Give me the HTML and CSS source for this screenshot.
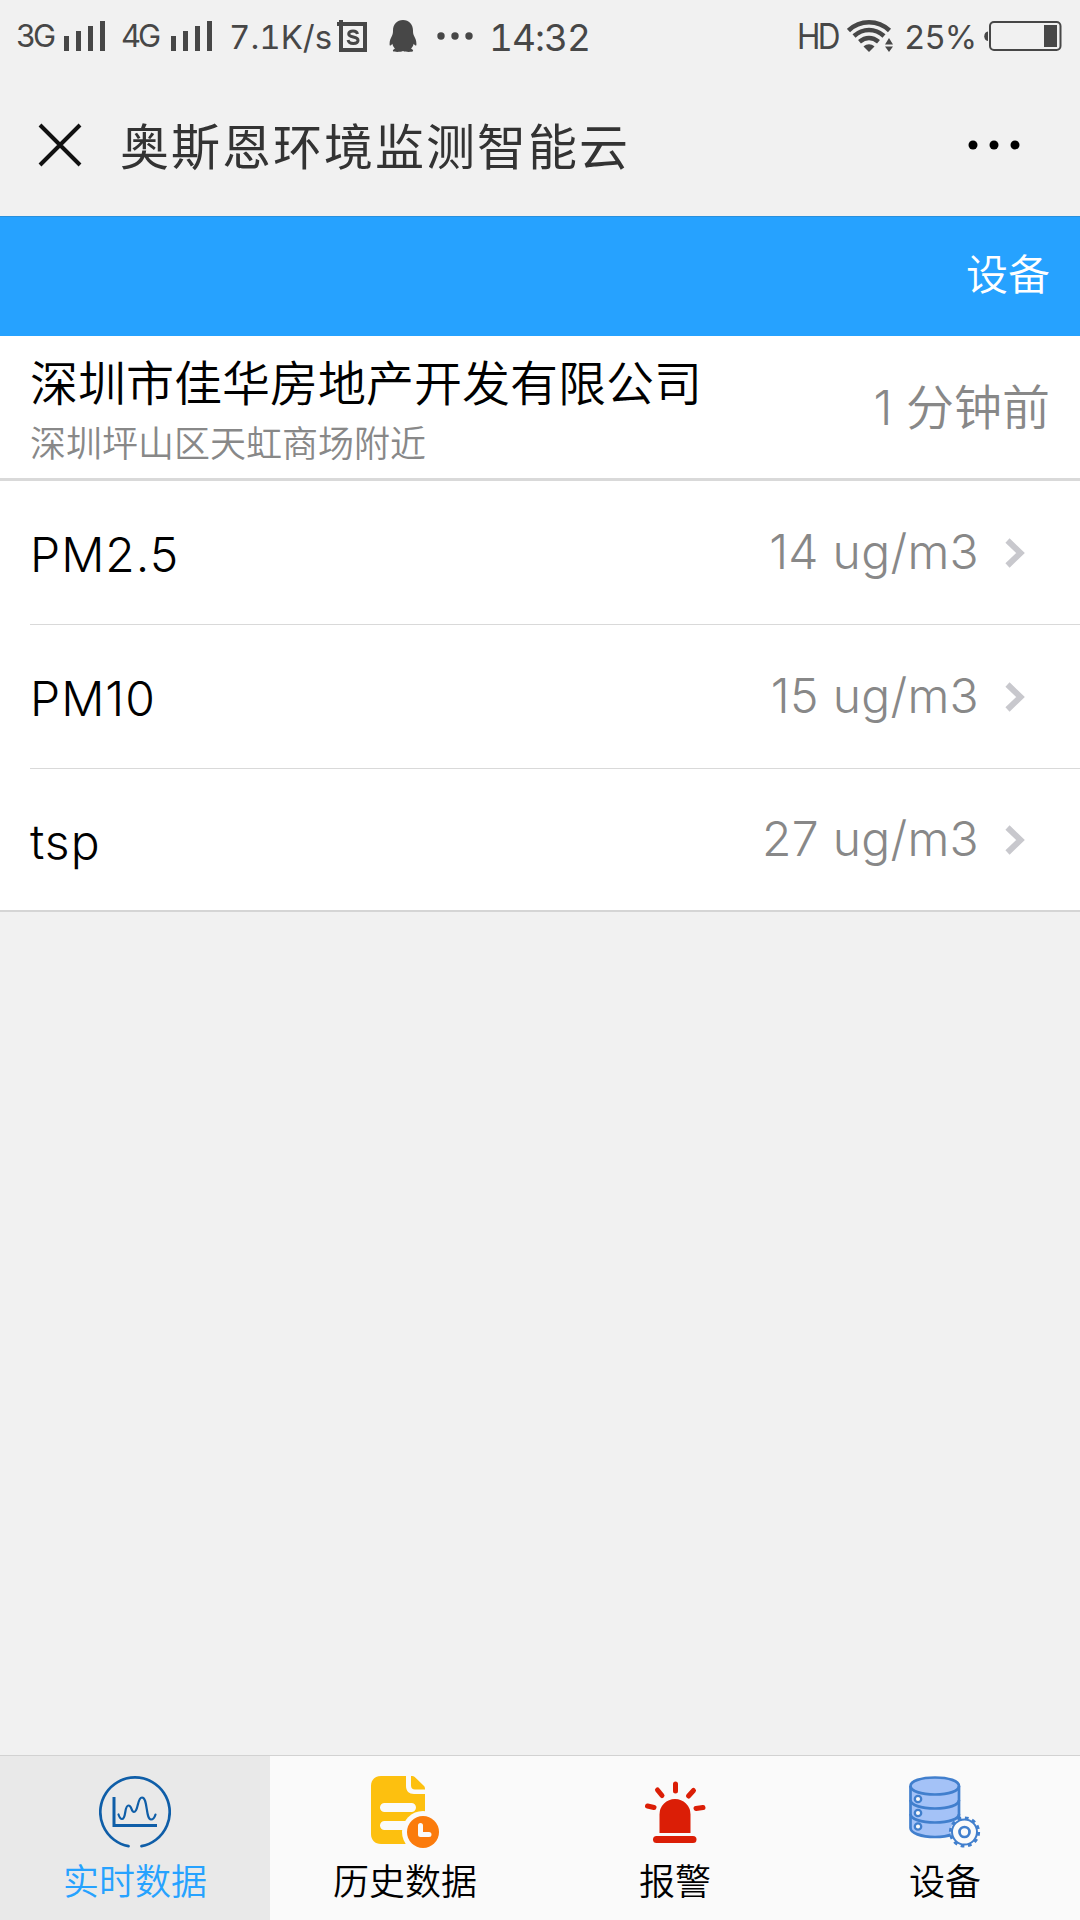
FILE: index.html
```html
<!DOCTYPE html>
<html lang="zh-CN">
<head>
    <meta charset="UTF-8">
    <title>奥斯恩环境监测智能云</title>
    <meta name="viewport" content="width=device-width, initial-scale=1.0">
    <link rel="stylesheet" href="styles.css">
</head>
<body>
    <div class="status">
        <span class="net">3G</span>
        <svg class="signal" width="42" height="30" viewBox="0 0 42 30"><path d="M0 15h5v15H0zM12 10h5v20h-5zM24 5h5v25h-5zM36 0h5v30h-5z"/></svg>
        <span class="net net-4g">4G</span>
        <svg class="signal" width="42" height="30" viewBox="0 0 42 30"><path d="M0 15h5v15H0zM12 10h5v20h-5zM24 5h5v25h-5zM36 0h5v30h-5z"/></svg>
        <span class="speed">7.1K/s</span>
        <svg class="sbox" width="30" height="32" viewBox="0 0 30 32">
            <path fill-rule="evenodd" d="M2 0h4v2h24v30H2V6H0V2h2zM6 6v22h20V6z"/>
            <path class="line" d="M20.500 14c-.5-2-2-3-4.500-3-2.600 0-4.300 1.200-4.300 3 0 4.200 9.300 1.800 9.300 6.200 0 2-2 3.200-4.700 3.200-2.800 0-4.800-1.200-5.200-3.500"/>
        </svg>
        <svg class="qq" width="28" height="32" viewBox="0 0 28 32"><path d="M14 0c6 0 10 4.500 10 10.500 0 2 .2 3.600 1 5.300 1.600 3 2.800 6 2.300 9.400-.5 1-1.700-.2-2.600-1.500-.5 2-1.400 3.500-2.600 5 1.600.7 2 1.200 2 2.300-1 1.200-7.300 1.200-10.100 0-2.800 1.200-9 1.200-10.100 0 0-1.100.5-1.600 2-2.300-1.200-1.500-2-3-2.600-5C2.400 25 1.200 26.200.7 25.200c-.5-3.400.7-6.400 2.300-9.400.8-1.700 1-3.300 1-5.300C4 4.500 8 0 14 0z"/></svg>
        <svg class="dots" width="36" height="8" viewBox="0 0 36 8"><circle cx="4" cy="4" r="3.700"/><circle cx="18" cy="4" r="3.700"/><circle cx="32" cy="4" r="3.700"/></svg>
        <span class="time">14:32</span>

        <span class="hd">HD</span>
        <svg class="wifi" width="46" height="32" viewBox="0 0 46 32">
            <g class="arc">
                <path d="M1.500 10.500C13-.5 31-.5 42.500 10.500"/>
                <path d="M7 16c9-8 21-8 30 0"/>
                <path d="M12.500 21.800c6-5 13-5 19 0"/>
            </g>
            <path d="M16.500 26.500c3.500-3 7.500-3 11 0L22 32z"/>
            <path d="M38 24.500l4-6.500 4 6.500zM38 26.500h8L42 32z"/>
        </svg>
        <span class="percent">25%</span>
        <svg class="battery" width="78" height="30" viewBox="0 0 78 30">
            <path d="M4 10.500v9.500c-5 0-5-9.500 0-9.500z"/>
            <rect class="case" x="6" y="1" width="70.500" height="28" rx="4"/>
            <path d="M60 4h13v22H60z"/>
        </svg>
    </div>

    <div class="titlebar">
        <svg class="close" width="44" height="44" viewBox="0 0 44 44"><path d="M2 2l40 40M42 2L2 42"/></svg>
        <h1>奥斯恩环境监测智能云</h1>
        <svg class="more" width="52" height="10" viewBox="0 0 52 10"><circle cx="5" cy="5" r="4.500"/><circle cx="26" cy="5" r="4.500"/><circle cx="47" cy="5" r="4.500"/></svg>
    </div>

    <div class="navbar"><a>设备</a></div>

    <div class="site">
        <div>
            <h2>深圳市佳华房地产开发有限公司</h2>
            <p>深圳坪山区天虹商场附近</p>
        </div>
        <span class="ago">1 分钟前</span>
    </div>

    <ul class="list">
        <li>
            <span class="name">PM2.5</span>
            <span class="value">14 ug/m3</span>
            <svg class="arrow" width="20" height="30" viewBox="0 0 20 30"><path d="M2.500 2.500L15.500 15l-13 12.500"/></svg>
        </li>
        <li>
            <span class="name">PM10</span>
            <span class="value">15 ug/m3</span>
            <svg class="arrow" width="20" height="30" viewBox="0 0 20 30"><path d="M2.500 2.500L15.500 15l-13 12.500"/></svg>
        </li>
        <li>
            <span class="name">tsp</span>
            <span class="value">27 ug/m3</span>
            <svg class="arrow" width="20" height="30" viewBox="0 0 20 30"><path d="M2.500 2.500L15.500 15l-13 12.500"/></svg>
        </li>
    </ul>

    <div class="tabbar">
        <a class="tab active">
            <svg width="72" height="72" viewBox="0 0 72 72" fill="none" stroke="#0f5ea8" stroke-linecap="round">
                <path stroke-width="2.700" d="M29.500 70.200A34.700 34.700 0 1 1 42.500 70.200"/>
                <path stroke-width="3" stroke-linecap="butt" d="M15 21v28.500h43"/>
                <path stroke-width="2.200" d="M19.500 38.500c1 3 2 4.500 3.500 4.500 4.500 0 2-13.500 6.500-13.500 3.500 0 2.500 6.500 5.500 6.500 4.500 0 3-14.500 8-14.500 6 0 3.500 22 9 22 2 0 3.500-1.500 4.500-5"/>
            </svg>
            <span>实时数据</span>
        </a>
        <a class="tab">
            <svg width="72" height="72" viewBox="0 0 72 72">
                <path fill="#fdc00f" d="M12 0h25v10c0 5 3 8 8 8h11v50H12C6 68 2 64 2 58V10C2 4 6 0 12 0z"/>
                <path fill="#fdc00f" d="M42 0c2 0 3 .3 4.500 1.700l8 7.800c1.300 1.200 1.500 2 1.500 4H46c-2.500 0-4-1.500-4-4z"/>
                <path stroke="#fafafa" stroke-width="9" stroke-linecap="round" d="M15.500 31.500h27M15.500 49.500h27"/>
                <circle cx="54" cy="56" r="21" fill="#fafafa"/>
                <circle cx="54" cy="56" r="16" fill="#fb7b0c"/>
                <path fill="none" stroke="#fafafa" stroke-width="5" stroke-linecap="round" stroke-linejoin="round" d="M51.500 49.500v9H60"/>
            </svg>
            <span>历史数据</span>
        </a>
        <a class="tab">
            <svg width="72" height="72" viewBox="0 0 72 72" fill="#db1e06">
                <path d="M20.500 57V38.500a15.500 15.500 0 0 1 31 0V57z"/>
                <rect x="14" y="60" width="43.500" height="7" rx="3.500"/>
                <path stroke="#db1e06" stroke-width="5" stroke-linecap="round" d="M36.500 8v7M18.500 14l4.500 5.500M54.500 14.500l-5 5.500M8.500 30l6.500 1.500M64 31.500l-7 1"/>
            </svg>
            <span>报警</span>
        </a>
        <a class="tab">
            <svg width="72" height="72" viewBox="0 0 72 72" fill="none" stroke="#417fcd" stroke-width="2.700">
                <path fill="#a4c2f7" d="M1.500 10C1.500 5 12 1.500 26 1.500S50 5 50 10v42c0 5-10 9-24 9S1.500 57 1.500 52z"/>
                <path d="M1.500 10c0 5 10.500 8.500 24.500 8.500S50 15 50 10M1.500 24c0 5 10.500 8.500 24.500 8.500S50 29 50 24M1.500 38c0 5 10.500 8.500 24.500 8.500S50 43 50 38"/>
                <g fill="#fafafa" stroke-width="2.300"><circle cx="9" cy="23" r="3.200"/><circle cx="9" cy="37" r="3.200"/><circle cx="9" cy="50.500" r="3.200"/></g>
                <circle cx="55.500" cy="56" r="14" fill="#fafafa" stroke="none"/>
                <circle cx="55.500" cy="56" r="12.500" stroke-width="2"/>
                <circle cx="55.500" cy="56" r="14" stroke-width="3.200" stroke-dasharray="3.670 3.660"/>
                <circle cx="55.500" cy="56" r="5"/>
            </svg>
            <span>设备</span>
        </a>
    </div>
</body>
</html>
```

FILE: styles.css
```css
* {
    box-sizing: border-box;
    margin: 0;
    padding: 0;
}
body {
    display: flex;
    flex-direction: column;
    height: 1920px;
    background: #f1f1f1;
    color: #000;
    font-family: Inter, "Noto Sans CJK SC", sans-serif;
    font-weight: 300;
    overflow: hidden;
}
svg {
    display: block;
    flex-shrink: 0;
}

/* phone status bar */
.status {
    display: flex;
    align-items: center;
    height: 72px;
    padding-left: 16px;
    color: #474747;
    fill: #474747;
    font-weight: 400;
    font-variant-numeric: tabular-nums;
    line-height: 72px;
    white-space: nowrap;
}
.net {
    width: 48px;
    font-size: 31px;
    letter-spacing: -3px;
}
.net-4g {
    margin-left: 15px;
    width: 50px;
}
.speed {
    width: 108px;
    margin-left: 16px;
    padding-top: 2px;
    font-size: 33px;
}
.sbox .line {
    fill: none;
    stroke: #474747;
    stroke-width: 3;
}
.qq {
    margin-left: 22px;
}
.dots {
    margin-left: 20px;
}
.time {
    width: 308px;
    margin-left: 16px;
    padding-top: 3px;
    font-size: 37px;
    letter-spacing: -1px;
}
.hd {
    width: 50px;
    font-size: 35px;
    letter-spacing: -3px;
    transform: scaleX(.9);
    transform-origin: left;
}
.wifi .arc {
    fill: none;
    stroke: #474747;
    stroke-width: 4.500;
}
.percent {
    width: 80px;
    margin-left: 11px;
    padding-top: 2px;
    font-size: 33px;
    letter-spacing: -1px;
}
.battery .case {
    fill: none;
    stroke: #474747;
    stroke-width: 2;
}

/* webview title */
.titlebar {
    display: flex;
    align-items: center;
    height: 144px;
    padding: 1px 60px 0 38px;
}
.close {
    fill: none;
    stroke: #111;
    stroke-width: 4;
}
.titlebar h1 {
    flex: 1;
    margin-left: 38px;
    padding-bottom: 3px;
    color: #333;
    font-size: 49px;
    font-weight: 400;
    letter-spacing: 2px;
}

.navbar {
    height: 120px;
    padding-right: 30px;
    background: #26a2ff;
    border-top: 1px solid #2a90dc;
    color: #fff;
    font-size: 42px;
    font-weight: 350;
    line-height: 116px;
    text-align: right;
}

.site {
    display: flex;
    justify-content: space-between;
    align-items: center;
    height: 145px;
    padding: 0 30px;
    background: #fff;
    border-bottom: 3px solid #d9d9d9;
    font-weight: 350;
}
.site h2 {
    padding-top: 8px;
    font-size: 48px;
    font-weight: 350;
    line-height: 66px;
}
.site p {
    color: #888;
    font-size: 36px;
    line-height: 54px;
}
.ago {
    padding-bottom: 7px;
    color: #888;
    font-size: 48px;
}

.list {
    background: #fff;
    border-bottom: 2px solid #d5d5d5;
    list-style: none;
}
.list li {
    display: flex;
    align-items: center;
    height: 144px;
    margin-left: 30px;
    padding-right: 55px;
    border-bottom: 1px solid #d9d9d9;
    font-size: 48px;
}
.list li:last-child {
    height: 141px;
    border-bottom: none;
}
.name {
    flex: 1;
    padding-top: 4px;
    letter-spacing: 1px;
}
.value {
    padding-bottom: 2px;
    color: #888;
    letter-spacing: .3px;
}
.arrow {
    margin-left: 26px;
    fill: none;
    stroke: #c8c8cd;
    stroke-width: 6;
}

/* bottom tabs */
.tabbar {
    display: flex;
    height: 165px;
    margin-top: auto;
    background: #fafafa;
    border-top: 1px solid #d2d2d2;
}
.tab {
    flex: 1;
    display: flex;
    flex-direction: column;
    align-items: center;
    padding-top: 20px;
    font-size: 36px;
    font-weight: 350;
}
.tab span {
    margin-top: 7px;
    line-height: 54px;
}
.tab.active {
    background: #e9e9e9;
    color: #26a2ff;
}
```
